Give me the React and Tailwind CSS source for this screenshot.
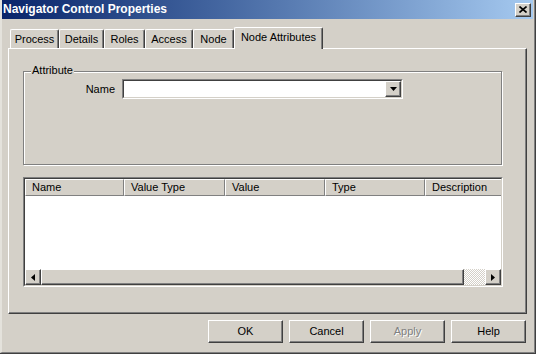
import React from 'react';

const font = "font-['Tahoma','Liberation_Sans',sans-serif]";

// classic raised 3d edge
const raised =
  'border border-t-white border-l-white border-r-[#404040] border-b-[#404040] shadow-[inset_-1px_-1px_0_#808080]';

const Tab = ({ label, w, active }) =>
  active ? (
    <div
      className={`relative z-10 mb-[-1px] h-[22px] ${w} bg-[#d4d0c8] border-t border-l border-r border-t-white border-l-white border-r-[#404040] rounded-t-[2px] shadow-[inset_-1px_0_0_#808080] flex justify-center pt-[3px]`}
    >
      {label}
    </div>
  ) : (
    <div
      className={`h-[19px] ${w} border-t border-l border-r border-t-white border-l-white border-r-[#404040] rounded-t-[2px] shadow-[inset_-1px_0_0_#808080] flex items-center justify-center`}
    >
      {label}
    </div>
  );

const Arrow = ({ dir }) => {
  const pts = {
    down: '0,0 7,0 3.5,4',
    left: '4,0 4,7 0,3.5',
    right: '0,0 0,7 4,3.5',
  };
  const size = dir === 'down' ? { width: 7, height: 4 } : { width: 4, height: 7 };
  return (
    <svg {...size} viewBox={`0 0 ${size.width} ${size.height}`}>
      <polygon points={pts[dir]} fill="#000" />
    </svg>
  );
};

const Button = ({ label, disabled }) => (
  <div
    className={`w-[75px] h-[23px] ${raised} flex items-center justify-center ${
      disabled ? 'text-[#808080] [text-shadow:1px_1px_0_#fff]' : 'text-black'
    }`}
  >
    {label}
  </div>
);

const columns = [
  { label: 'Name', w: 'w-[99px]' },
  { label: 'Value Type', w: 'w-[101px]' },
  { label: 'Value', w: 'w-[100px]' },
  { label: 'Type', w: 'w-[100px]' },
  { label: 'Description', w: 'w-[80px]' },
];

export default function App() {
  return (
    <div className={`w-[536px] h-[354px] overflow-hidden bg-[#d4d0c8] text-[11px] leading-[13px] text-black ${font}`}>
      <div className="h-full border-r border-b border-[#404040]">
        <div className="h-full border-r border-b border-[#808080] border-l-2 border-l-[#e4e2dc] pr-px flex flex-col">
          {/* Title bar */}
          <div className="h-[19px] shrink-0 flex items-center justify-between pl-[1px] pr-[2px] bg-gradient-to-r from-[#0a246a] to-[#a6caf0]">
            <span className="text-white font-bold text-[12px] font-['Liberation_Sans',sans-serif]">
              Navigator Control Properties
            </span>
            <div className={`w-[16px] h-[14px] bg-[#d4d0c8] ${raised} flex items-center justify-center`}>
              <svg width="8" height="7" viewBox="0 0 8 7">
                <path d="M0.5 0.5 L7.5 6.5 M7.5 0.5 L0.5 6.5" stroke="#000" strokeWidth="1.6" />
              </svg>
            </div>
          </div>

          {/* Tabs */}
          <div className="mt-[8px] ml-[6px] mr-[6px] flex flex-col">
            <div className="h-[21px] flex items-end pl-[2px]">
              <Tab label="Process" w="w-[49px]" />
              <Tab label="Details" w="w-[45px]" />
              <Tab label="Roles" w="w-[41px]" />
              <Tab label="Access" w="w-[48px]" />
              <Tab label="Node" w="w-[41px]" />
              <Tab label="Node Attributes" w="w-[89px]" active />
            </div>

            {/* Panel */}
            <div className="h-[266px] border border-t-white border-l-white border-r-[#404040] border-b-[#404040] shadow-[inset_-1px_-1px_0_#808080] pl-[14px] pt-[22px]">
              {/* Group box */}
              <div className="relative w-[479px] h-[94px] border border-[#808080] shadow-[inset_1px_1px_0_#fff,1px_1px_0_#fff] pt-[7px]">
                <span className="absolute left-[7px] top-[-8px] px-[1px] bg-[#d4d0c8]">Attribute</span>
                <div className="flex items-center">
                  <span className="w-[98px] text-right pr-[7px]">Name</span>
                  <div className="w-[281px] h-[20px] border border-t-[#808080] border-l-[#808080] border-r-white border-b-white">
                    <div className="h-full bg-white border border-t-[#404040] border-l-[#404040] border-r-[#d4d0c8] border-b-[#d4d0c8] flex justify-end">
                      <div className={`w-[16px] h-[16px] bg-[#d4d0c8] ${raised} flex items-center justify-center`}>
                        <Arrow dir="down" />
                      </div>
                    </div>
                  </div>
                </div>
              </div>

              {/* List view */}
              <div className="mt-[12px] w-[480px] h-[110px] border border-t-[#808080] border-l-[#808080] border-r-white border-b-white">
                <div className="h-full bg-white border border-t-[#404040] border-l-[#404040] border-r-[#d4d0c8] border-b-[#d4d0c8] flex flex-col overflow-hidden">
                  <div className="h-[17px] shrink-0 flex bg-[#d4d0c8]">
                    {columns.map((c) => (
                      <div
                        key={c.label}
                        className={`${c.w} shrink-0 h-full border-t border-l border-t-white border-l-white border-r border-b border-r-[#808080] border-b-[#808080] pl-[6px] flex items-center whitespace-nowrap`}
                      >
                        {c.label}
                      </div>
                    ))}
                  </div>
                  <div className="flex-1" />
                  <div className="h-[16px] shrink-0 flex bg-[#d4d0c8]">
                    <div className={`w-[16px] h-[16px] ${raised} flex items-center justify-center`}>
                      <Arrow dir="left" />
                    </div>
                    <div className={`w-[423px] h-[16px] ${raised}`} />
                    <div className="flex-1 h-[16px] bg-[repeating-conic-gradient(#fff_0_25%,#d4d0c8_0_50%)] bg-[length:2px_2px]" />
                    <div className={`w-[16px] h-[16px] ${raised} flex items-center justify-center`}>
                      <Arrow dir="right" />
                    </div>
                  </div>
                </div>
              </div>
            </div>
          </div>

          {/* Buttons */}
          <div className="mt-[6px] mr-[7px] flex justify-end gap-[6px]">
            <Button label="OK" />
            <Button label="Cancel" />
            <Button label="Apply" disabled />
            <Button label="Help" />
          </div>
        </div>
      </div>
    </div>
  );
}
